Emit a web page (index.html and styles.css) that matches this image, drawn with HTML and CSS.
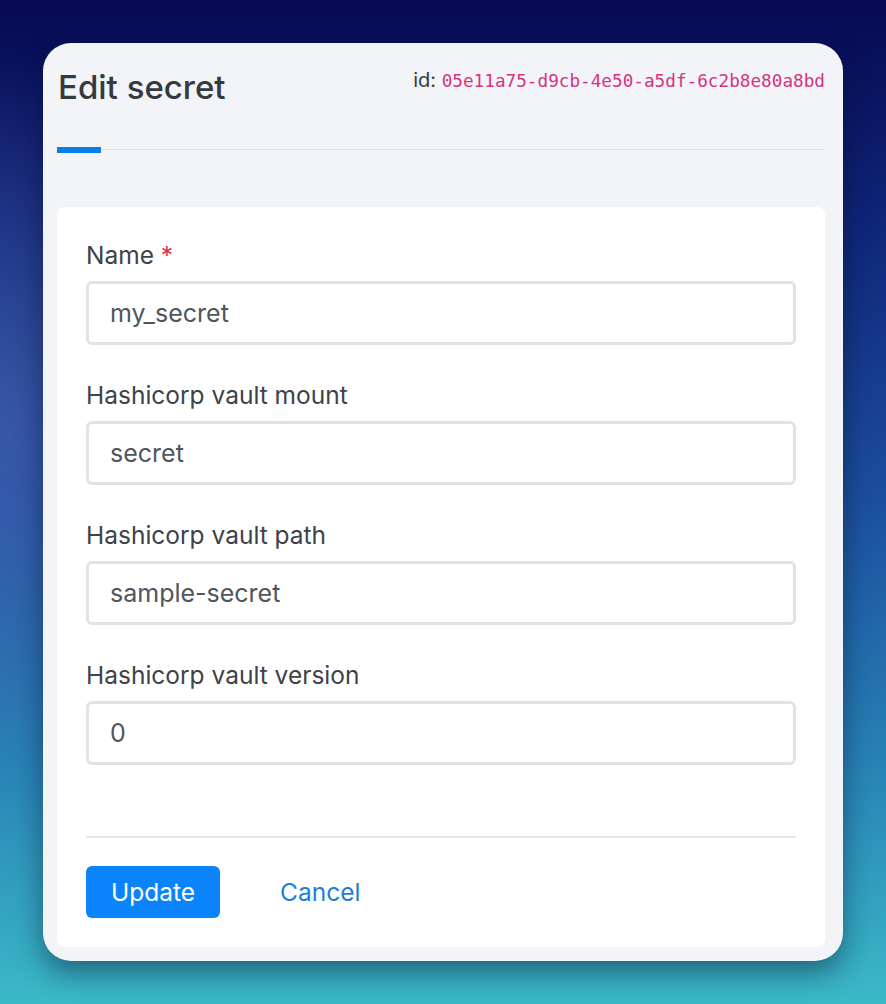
FILE: index.html
```html
<html>

<head>
    <link rel="stylesheet" href="styles.css">
</head>

<body>

    <div class="window">
        <div class="header">
            <h1 class="title">Edit secret</h1>
            <div class="secret-id">id: <code>05e11a75-d9cb-4e50-a5df-6c2b8e80a8bd</code></div>
        </div>
        <div class="tabs">
            <span class="tab-active"></span>
        </div>
        <form class="card">
            <div class="group">
                <label>Name <span class="required">*</span></label>
                <input type="text" value="my_secret">
            </div>
            <div class="group">
                <label>Hashicorp vault mount</label>
                <input type="text" value="secret">
            </div>
            <div class="group">
                <label>Hashicorp vault path</label>
                <input type="text" value="sample-secret">
            </div>
            <div class="group">
                <label>Hashicorp vault version</label>
                <input type="text" value="0">
            </div>
            <div class="actions">
                <button type="button" class="btn btn-primary">Update</button>
                <a class="btn btn-link">Cancel</a>
            </div>
        </form>
    </div>

</body>

</html>
```

FILE: styles.css
```css
body {
    margin: 0;
    height: 1004px;
    overflow: hidden;
    font-family: Inter, 'Noto Sans', sans-serif;
    background:
        radial-gradient(ellipse 420px 520px at 0% 42%, rgba(95, 110, 190, 0.45), transparent 70%),
        linear-gradient(180deg, #060a52 0%, #0f2578 22%, #1c4f9e 50%, #2780b5 75%, #3bb9c7 100%);
}

.window {
    margin: 43px 0 0 43px;
    width: 800px;
    height: 918px;
    box-sizing: border-box;
    padding: 0 18px 14px 14px;
    background: #f2f4f8;
    border-radius: 28px;
    box-shadow: 0 12px 28px rgba(0, 10, 40, 0.45);
}

.header {
    display: flex;
    justify-content: space-between;
    align-items: flex-start;
    padding-top: 24px;
}

.title {
    margin: 0 0 0 1px;
    font-size: 33px;
    line-height: 40px;
    font-weight: 500;
    color: #343a40;
}

.secret-id {
    margin-top: 1px;
    font-size: 20px;
    line-height: 24px;
    color: #343a40;
}

.secret-id code {
    font-family: 'DejaVu Sans Mono', 'Liberation Mono', monospace;
    font-size: 17.7px;
    color: #d63384;
}

.tabs {
    display: flex;
    margin-top: 40px;
    border-bottom: 1px solid #dde1e6;
}

.tab-active {
    width: 44px;
    height: 6px;
    margin-bottom: -4px;
    background: #0a7ee6;
}

.card {
    margin: 57px 0 0 0;
    padding: 33px 29px 29px 29px;
    background: #fff;
    border-radius: 8px;
}

.group {
    margin-bottom: 35px;
}

.group label {
    display: block;
    margin-bottom: 11px;
    font-size: 24.5px;
    line-height: 30px;
    color: #3d4349;
}

.required {
    color: #dc3545;
}

.group input {
    display: block;
    width: 100%;
    height: 64px;
    box-sizing: border-box;
    padding: 0 21px;
    border: 3px solid #dfe3e8;
    border-radius: 6px;
    font-family: Inter, 'Noto Sans', sans-serif;
    font-size: 25px;
    color: #50565c;
    outline: none;
}

.actions {
    display: flex;
    align-items: center;
    gap: 36px;
    margin-top: 71px;
    padding-top: 28px;
    border-top: 2px solid #e3e6ea;
}

.btn {
    height: 52px;
    box-sizing: border-box;
    padding: 0 24px;
    border: none;
    border-radius: 6px;
    font-family: Inter, 'Noto Sans', sans-serif;
    font-size: 24.5px;
    line-height: 52px;
}

.btn-primary {
    width: 134px;
    background: #0b84fb;
    color: #fff;
}

.btn-link {
    padding: 0 24px;
    color: #1c7fd6;
    cursor: pointer;
}
```
